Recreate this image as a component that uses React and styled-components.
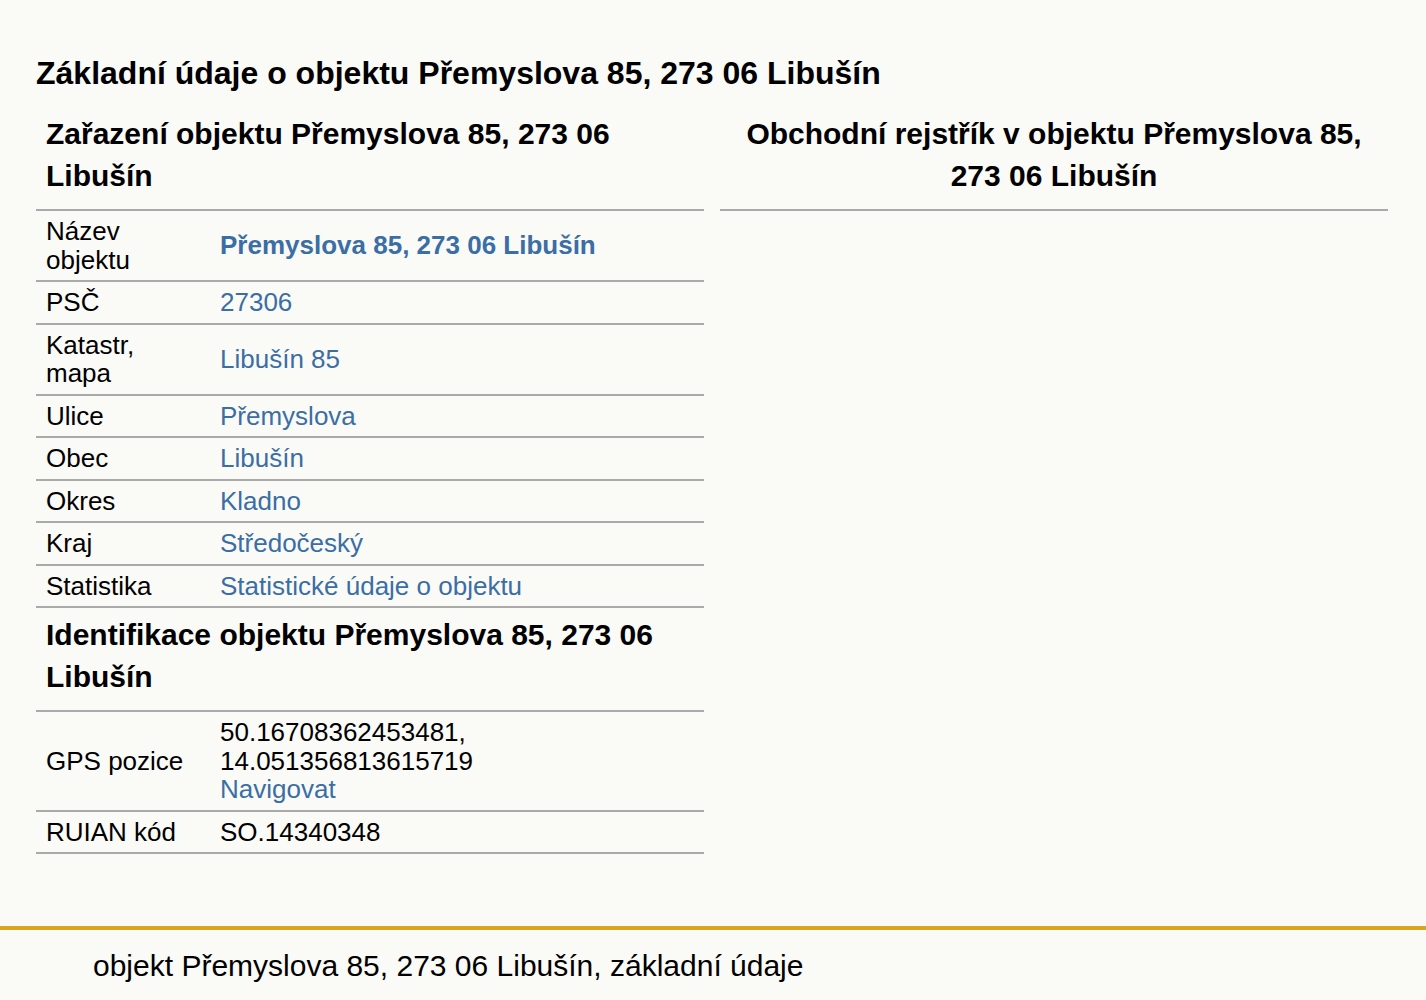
import React from "react";
import styled, { createGlobalStyle } from "styled-components";

const Global = createGlobalStyle`
  html, body { margin: 0; padding: 0; background: #fafaf7; }
  body { font-family: "Liberation Sans", Arial, sans-serif; color: #000; }
`;

const Page = styled.div`
  min-height: 1000px;
  display: flex;
  flex-direction: column;
`;

const Main = styled.main`
  padding: 55px 38px 72px 36px;
`;

const Title = styled.h1`
  margin: 0 0 16px;
  font-size: 32px;
  line-height: 36px;
  font-weight: bold;
`;

const Columns = styled.div`
  display: grid;
  grid-template-columns: 1fr 1fr;
  gap: 16px;
  align-items: start;
`;

const Section = styled.div`
  display: flex;
  flex-direction: column;
`;

const Heading = styled.h2`
  margin: 0;
  padding: 6px 10px 12px;
  font-size: 30px;
  line-height: 42px;
  font-weight: bold;
  text-align: ${(p) => (p.$center ? "center" : "left")};
  border-bottom: 2px solid #aaa;
`;

const Table = styled.table`
  width: 100%;
  border-collapse: collapse;
  font-size: 26px;
  line-height: 28.5px;
`;

const Row = styled.tr`
  border-bottom: 2px solid #aaa;
`;

const Label = styled.td`
  width: 154px;
  padding: 6px 10px;
  vertical-align: middle;
`;

const Value = styled.td`
  padding: 6px 10px;
  vertical-align: middle;
`;

const Link = styled.a`
  color: #3a6ea5;
  text-decoration: none;
  font-weight: ${(p) => (p.$bold ? "bold" : "normal")};
`;

const Footer = styled.footer`
  border-top: 4px solid #daa520;
  padding: 19px 57px 20px 93px;
  font-size: 30px;
  line-height: 34px;
`;

const place = "Přemyslova 85, 273 06 Libušín";

const rows = [
  ["Název objektu", <Link href="#" $bold>{place}</Link>],
  ["PSČ", <Link href="#">27306</Link>],
  ["Katastr, mapa", <Link href="#">Libušín 85</Link>],
  ["Ulice", <Link href="#">Přemyslova</Link>],
  ["Obec", <Link href="#">Libušín</Link>],
  ["Okres", <Link href="#">Kladno</Link>],
  ["Kraj", <Link href="#">Středočeský</Link>],
  ["Statistika", <Link href="#">Statistické údaje o objektu</Link>],
];

export default function App() {
  return (
    <Page>
      <Global />
      <Main>
        <Title>Základní údaje o objektu {place}</Title>
        <Columns>
          <Section>
            <Heading>Zařazení objektu {place}</Heading>
            <Table>
              <tbody>
                {rows.map(([l, v]) => (
                  <Row key={l}>
                    <Label>{l}</Label>
                    <Value>{v}</Value>
                  </Row>
                ))}
              </tbody>
            </Table>
            <Heading>Identifikace objektu {place}</Heading>
            <Table>
              <tbody>
                <Row>
                  <Label>GPS pozice</Label>
                  <Value>
                    50.16708362453481,
                    <br />
                    14.051356813615719
                    <br />
                    <Link href="#">Navigovat</Link>
                  </Value>
                </Row>
                <Row>
                  <Label>RUIAN kód</Label>
                  <Value>SO.14340348</Value>
                </Row>
              </tbody>
            </Table>
          </Section>
          <Section>
            <Heading $center>Obchodní rejstřík v objektu {place}</Heading>
          </Section>
        </Columns>
      </Main>
      <Footer>objekt {place}, základní údaje</Footer>
    </Page>
  );
}
